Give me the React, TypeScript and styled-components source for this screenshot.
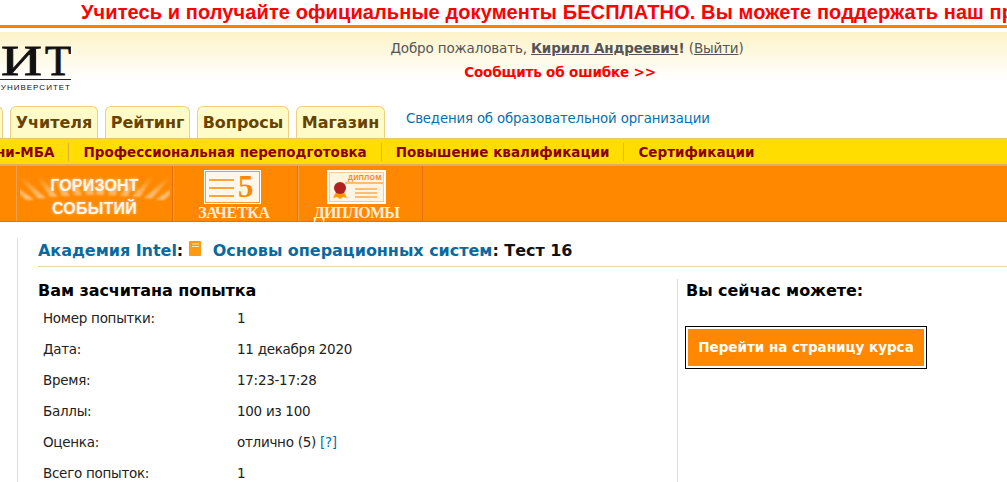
import React from 'react'
import styled, { createGlobalStyle } from 'styled-components'

const Global = createGlobalStyle`
  html, body { margin:0; padding:0; background:#fff; overflow:hidden; }
  body { font-family:"DejaVu Sans", Tahoma, sans-serif; }
`;
const Page = styled.div`
  width:1007px;
  height:482px;
  overflow:hidden;
  font-size:13.5px;
  letter-spacing:-0.15px;
  color:#222;
`;
const Banner = styled.div`
  height:25px;
  border-bottom:3px solid #ff8000;
  padding-left:81px;
  font-family:"Liberation Sans", Arial, sans-serif;
  font-weight:bold;
  font-size:20px;
  line-height:24px;
  color:#ff0000;
  white-space:nowrap;
  overflow:hidden;
  letter-spacing:0.1px;
`;
const Header = styled.div`
  margin-top:4px;
  height:73px;
  display:flex;
  background:linear-gradient(#fdf3c8, #fff 48px);
`;
const Logo = styled.div`
  width:71px;
  flex:none;
  overflow:hidden;
  display:flex;
  flex-direction:column;
  align-items:flex-end;
  color:#111;
`;
const LogoMark = styled.div`
  font-family:"Liberation Serif", serif;
  font-size:43px;
  line-height:38px;
  margin-top:10px;
  height:38px;
  -webkit-text-stroke:0.8px #111;
  white-space:nowrap;
  border-bottom:1px solid #222;
  width:100px;
  text-align:right;
  box-sizing:border-box;
`;
const LogoWideLetter = styled.span`
  display:inline-block;
  transform:scaleX(1.32);
  transform-origin:right center;
  margin-right:3px;
`;
const LogoSub = styled.div`
  font-family:"Liberation Sans", sans-serif;
  font-size:8px;
  line-height:10px;
  letter-spacing:1px;
  margin-top:3px;
  white-space:nowrap;
`;
const Welcome = styled.div`
  width:979px;
  padding:6px 0 0 56px;
  box-sizing:border-box;
  text-align:center;
  line-height:20px;
  color:#555;
  a { color:#555; text-decoration:underline; }
`;
const UserName = styled.a`
  font-weight:bold;
`;
const ErrorLink = styled.div`
  margin-top:4px;
  padding-right:14px;
  color:#ff0000;
  font-weight:bold;
`;
const TabsRow = styled.div`
  height:33px;
  display:flex;
  align-items:flex-end;
  margin-left:-10px;
`;
const Tab = styled.div<{ $w: number }>`
  height:32px;
  width:${(p) => p.$w}px;
  box-sizing:border-box;
  margin-right:7px;
  border:1px solid #f0cf80;
  border-bottom:none;
  border-radius:6px 6px 0 0;
  background:#fffbc8;
  color:#664400;
  font-weight:bold;
  font-size:16px;
  line-height:31px;
  letter-spacing:0;
  text-align:center;
  white-space:nowrap;
  overflow:hidden;
`;
const InfoLink = styled.a`
  margin:0 0 6px 14px;
  align-self:center;
  color:#0a6ea8;
  font-size:13.3px;
`;
const SubNav = styled.div`
  height:28px;
  box-sizing:border-box;
  display:flex;
  align-items:center;
  background:#ffdd00;
  border-top:1px solid #e8c860;
  border-bottom:2px solid #d8b060;
  margin-left:-41px;
  white-space:nowrap;
  letter-spacing:0;
`;
const SubItem = styled.a`
  color:#8a0000;
  font-weight:bold;
  padding:0 14px;
  line-height:18px;
  border-right:1px solid #d8b040;
  &:last-child { border-right:none; }
`;
const ImageBar = styled.div`
  height:55px;
  display:flex;
  background:#ff8800;
  border-bottom:1px solid #e07020;
  padding-left:16px;
`;
const ImageCell = styled.div<{ $w: number; $shift?: number }>`
  width:${(p) => p.$w}px;
  box-sizing:border-box;
  flex:none;
  border-left:1px solid #f0a050;
  border-right:1px solid #e07010;
  padding:4px ${(p) => p.$shift || 0}px 0 0;
  display:flex;
  flex-direction:column;
  align-items:center;
`;
const Caption = styled.div<{ $spacing: number }>`
  font-family:"Liberation Serif", serif;
  font-weight:bold;
  font-size:16px;
  line-height:16px;
  letter-spacing:${(p) => p.$spacing}px;
  margin-top:1px;
  color:#ffeedd;
`;
const Horizon = styled.div`
  position:relative;
  width:150px;
  height:55px;
  margin-top:-4px;
  font-family:"Liberation Sans", sans-serif;
  font-weight:bold;
  font-size:16px;
  letter-spacing:0.2px;
  color:#fff6ec;
  text-align:center;
  svg { position:absolute; left:0; top:0; }
`;
const HorizonWord = styled.div<{ $top: number }>`
  position:relative;
  line-height:18px;
  padding-top:${(p) => p.$top}px;
  text-shadow:0 0 3px #fff8;
`;
const CardSvg = styled.svg`
  margin-right:3px;
  flex:none;
`;
const Content = styled.div`
  margin:16px 0 0 17px;
  border-left:1px solid #eadfb8;
  padding-left:20px;
`;
const Crumbs = styled.div`
  height:29px;
  box-sizing:border-box;
  border-bottom:1px solid #e8d8a8;
  font-weight:bold;
  font-size:16px;
  line-height:26px;
  letter-spacing:-0.03px;
  color:#111;
  white-space:nowrap;
  a { color:#0a6a9f; }
`;
const BookIcon = styled.svg`
  margin:0 12px 0 0;
  vertical-align:0;
`;
const Columns = styled.div`
  display:flex;
  margin-top:12px;
`;
const Main = styled.div`
  width:639px;
  flex:none;
`;
const Aside = styled.div`
  flex:1;
  border-left:1px solid #eedcb0;
  padding-left:8px;
  height:220px;
`;
const Heading = styled.h3`
  margin:1px 0;
  font-size:16px;
  line-height:22px;
  letter-spacing:-0.05px;
  color:#000;
`;
const ResultRow = styled.div`
  display:flex;
  height:31px;
  line-height:31px;
  padding-left:5px;
  letter-spacing:-0.28px;
  color:#222;
`;
const ResultLabel = styled.div`
  width:194px;
  flex:none;
`;
const Hint = styled.a`
  color:#0a6ea8;
`;
const ActionButton = styled.a`
  display:block;
  margin:24px 0 0 -1px;
  width:242px;
  height:43px;
  box-sizing:border-box;
  border:1px solid #000;
  padding:2px;
`;
const ButtonFace = styled.div`
  height:37px;
  background:#ff8800;
  color:#fff;
  font-weight:bold;
  line-height:37px;
  letter-spacing:0;
  text-align:center;
`;

const CardIcon = () => (
  <CardSvg width="57" height="34" viewBox="0 0 57 34">
    <rect width="57" height="34" fill="#fff" />
    <rect x="1.5" y="1.5" width="54" height="31" fill="#fff6ec" stroke="#ff9a30" />
    <path d="M5 10h25M5 18h25M5 26h25" stroke="#ff8800" strokeWidth="1.4" />
    <text x="34" y="27" fontFamily="Liberation Serif" fontWeight="bold" fontSize="31" fill="#ff8800">5</text>
  </CardSvg>
);
const DiplomaIcon = () => (
  <svg width="59" height="34" viewBox="0 0 59 34">
    <rect width="59" height="34" fill="#fff" />
    <rect x="2.5" y="2.5" width="54" height="29" fill="#fff3e2" stroke="#ff9a30" strokeDasharray="1 1" />
    <text x="21" y="10" fontFamily="Liberation Sans" fontWeight="bold" fontSize="7" letterSpacing="0.4" fill="#ff8800">ДИПЛОМ</text>
    <path d="M18 13h38M28 19h22M28 23h22M28 27h22" stroke="#ff8800" strokeWidth="1.2" />
    <path d="M9 22l-3 6 4-1 3 2 3-2 4 1-3-6z" fill="#ff9800" />
    <circle cx="13" cy="18" r="6" fill="#b02020" />
  </svg>
);
const rayStops = [10, 22, 34, 46, 58, 70, 80, 92, 104, 116, 128, 140];
const Rays = () => (
  <svg width="150" height="55" viewBox="0 0 150 55">
    <defs>
      <linearGradient id="ray" gradientUnits="userSpaceOnUse" x1="0" y1="10" x2="0" y2="36">
        <stop offset="0" stopColor="#fff" stopOpacity="0" />
        <stop offset="1" stopColor="#fff" stopOpacity="0.6" />
      </linearGradient>
      <filter id="soft"><feGaussianBlur stdDeviation="0.8" /></filter>
    </defs>
    <g filter="url(#soft)" fill="url(#ray)">
      {rayStops.map((x) => {
        const y = 29 + 5 * ((x - 75) / 67) ** 2;
        const dx = (x - 75) * 0.38;
        return <path key={x} d={`M${x - 4} ${y}L${x + dx - 2} ${y - 20}H${x + dx + 2}L${x + 4} ${y}z`} />;
      })}
    </g>
  </svg>
);

const results: [string, React.ReactNode][] = [
  ['Номер попытки:', '1'],
  ['Дата:', '11 декабря 2020'],
  ['Время:', '17:23-17:28'],
  ['Баллы:', '100 из 100'],
  ['Оценка:', <>отлично (5) <Hint>[?]</Hint></>],
  ['Всего попыток:', '1'],
];
const tabs: [string, number][] = [['', 13], ['Учителя', 88], ['Рейтинг', 85], ['Вопросы', 92], ['Магазин', 89]];

const App = () => (
  <Page>
    <Global />
    <Banner>Учитесь и получайте официальные документы БЕСПЛАТНО. Вы можете поддержать наш проект</Banner>
    <Header>
      <Logo>
        <LogoMark><LogoWideLetter>И</LogoWideLetter>Т</LogoMark>
        <LogoSub>УНИВЕРСИТЕТ</LogoSub>
      </Logo>
      <Welcome>
        Добро пожаловать, <UserName>Кирилл Андреевич</UserName><b>!</b> (<a>Выйти</a>)
        <ErrorLink>Сообщить об ошибке &gt;&gt;</ErrorLink>
      </Welcome>
    </Header>
    <TabsRow>
      {tabs.map(([name, w]) => <Tab key={name} $w={w}>{name}</Tab>)}
      <InfoLink>Сведения об образовательной организации</InfoLink>
    </TabsRow>
    <SubNav>
      <SubItem>Мини-МБА</SubItem>
      <SubItem>Профессиональная переподготовка</SubItem>
      <SubItem>Повышение квалификации</SubItem>
      <SubItem>Сертификации</SubItem>
    </SubNav>
    <ImageBar>
      <ImageCell $w={157}>
        <Horizon>
          <Rays />
          <HorizonWord $top={11}>ГОРИЗОНТ</HorizonWord>
          <HorizonWord $top={5}>СОБЫТИЙ</HorizonWord>
        </Horizon>
      </ImageCell>
      <ImageCell $w={125} $shift={3}>
        <CardIcon />
        <Caption $spacing={-0.3}>ЗАЧЕТКА</Caption>
      </ImageCell>
      <ImageCell $w={125} $shift={8}>
        <DiplomaIcon />
        <Caption $spacing={-0.8}>ДИПЛОМЫ</Caption>
      </ImageCell>
    </ImageBar>
    <Content>
      <Crumbs>
        <a>Академия Intel</a>:{' '}
        <BookIcon width="12" height="15" viewBox="0 0 12 15">
          <rect width="12" height="15" rx="1" fill="#ff9a10" />
          <path d="M3 3h7M3 5.5h7" stroke="#ffe8b0" strokeWidth="1" />
        </BookIcon>
        <a>Основы операционных систем</a>: Тест 16
      </Crumbs>
      <Columns>
        <Main>
          <Heading>Вам засчитана попытка</Heading>
          {results.map(([label, value]) => (
            <ResultRow key={label}>
              <ResultLabel>{label}</ResultLabel>
              <div>{value}</div>
            </ResultRow>
          ))}
        </Main>
        <Aside>
          <Heading>Вы сейчас можете:</Heading>
          <ActionButton><ButtonFace>Перейти на страницу курса</ButtonFace></ActionButton>
        </Aside>
      </Columns>
    </Content>
  </Page>
)

export default App
